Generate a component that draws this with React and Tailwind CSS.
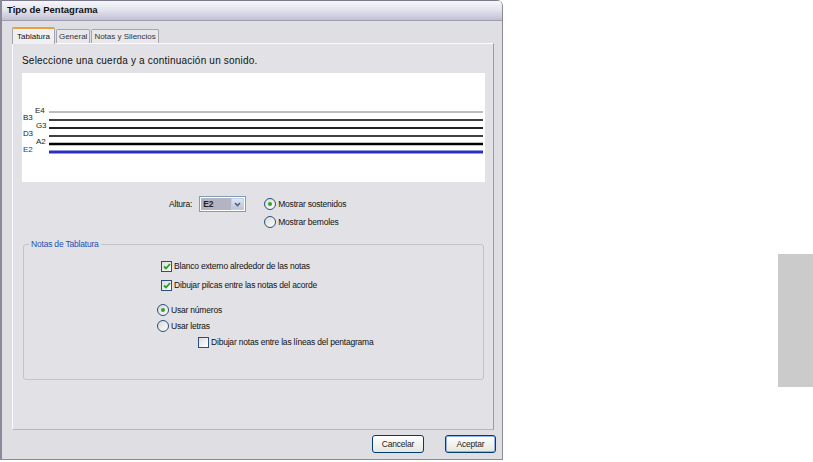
import React from "react";

const Radio = ({ checked, label }) => (
  <div className="flex items-center gap-[2px] h-[16px]">
    <span className="w-[12px] h-[12px] rounded-full border border-[#2b4f7a] bg-gradient-to-br from-[#d8d8d8] to-white flex items-center justify-center">
      {checked && <span className="w-[4px] h-[4px] rounded-full bg-[#2fa32f]" />}
    </span>
    <span>{label}</span>
  </div>
);

const Check = ({ checked, label }) => (
  <div className="flex items-center gap-[2px] h-[16px]">
    <span className="w-[11px] h-[11px] border border-[#2b4f7a] bg-gradient-to-br from-[#dcdcdc] to-white flex items-center justify-center">
      {checked && (
        <svg width="8" height="7" viewBox="0 0 8 7">
          <path d="M1 3.5 L3 5.5 L7 1" stroke="#21a121" strokeWidth="1.8" fill="none" />
        </svg>
      )}
    </span>
    <span>{label}</span>
  </div>
);

const Staff = () => {
  const lines = [
    { y: 39, w: 1, c: "#7a7a7a" },
    { y: 47, w: 1.4, c: "#000" },
    { y: 55, w: 2, c: "#222" },
    { y: 63, w: 1.4, c: "#000" },
    { y: 71, w: 2.6, c: "#000" },
    { y: 79, w: 3, c: "#2a2fc0" },
  ];
  const labels = [
    { t: "E4", x: 13, y: 40 },
    { t: "B3", x: 1, y: 47 },
    { t: "G3", x: 14, y: 55 },
    { t: "D3", x: 1, y: 63 },
    { t: "A2", x: 14, y: 71 },
    { t: "E2", x: 1, y: 79, c: "#2a2fc0" },
  ];
  return (
    <svg width="462" height="109" className="block">
      {lines.map((l) => (
        <line key={l.y} x1="27" x2="461" y1={l.y} y2={l.y} stroke={l.c} strokeWidth={l.w} />
      ))}
      {labels.map((l) => (
        <text key={l.t} x={l.x} y={l.y} fontSize="8" fill={l.c || "#222"} fontFamily="Liberation Sans, sans-serif">
          {l.t}
        </text>
      ))}
    </svg>
  );
};

export default function App() {
  return (
    <div className="w-[813px] h-[462px] bg-white flex justify-between font-['Liberation_Sans',sans-serif] text-[8.5px] tracking-[-0.2px] text-[#111]">
      <div className="w-[503px] h-[460px] flex flex-col bg-[#dfdfe3] border-l-2 border-r border-b border-[#8a8a98] rounded-tr-[6px] overflow-hidden">
        {/* title bar */}
        <div className="h-[21px] shrink-0 border-t border-[#7a7a8c] bg-gradient-to-b from-[#f6f6fa] via-[#e2e2ec] to-[#c0c0d4] border-b border-b-[#9e9eb0] flex items-center pl-[5px] font-bold text-[9.5px] tracking-normal text-[#111]">
          Tipo de Pentagrama
        </div>

        {/* tabs */}
        <div className="flex items-end h-[22px] pl-[10px] shrink-0 text-[8px] tracking-normal">
          <div className="h-[17px] px-[4px] flex items-center bg-[#f0f0f4] border border-b-0 border-[#a5a5b0] border-t-2 border-t-[#e6a23a] rounded-t-[2px] relative z-10 -mb-px">
            Tablatura
          </div>
          <div className="h-[14px] px-[2px] ml-[1px] flex items-center bg-[#e8e8ec] border border-b-0 border-[#a5a5b0] rounded-t-[2px] text-[#333]">
            General
          </div>
          <div className="h-[14px] px-[2px] ml-[1px] flex items-center bg-[#e8e8ec] border border-b-0 border-[#a5a5b0] rounded-t-[2px] text-[#333]">
            Notas y Silencios
          </div>
        </div>

        {/* panel */}
        <div className="ml-[10px] mr-[8px] h-[387px] shrink-0 bg-[#e2e2e6] border border-t-[#fbfbfb] border-l-[#fbfbfb] border-r-[#9a9aa4] border-b-[#b5b5bc] flex flex-col pl-[9px] pr-[8px]">
          <div className="mt-[10px] h-[12px] flex items-center text-[10px] tracking-[0.2px]">
            Seleccione una cuerda y a continuación un sonido.
          </div>
          <div className="mt-[7px] h-[109px] bg-white">
            <Staff />
          </div>

          {/* altura row */}
          <div className="mt-[14px] flex items-start">
            <div className="ml-[147px] h-[16px] flex items-center">Altura:</div>
            <div className="ml-[7px] w-[47px] h-[16px] bg-white border border-[#7f9db9] flex items-center p-[1px]">
              <span className="flex-1 h-full bg-[#b3b3c2] flex items-center pl-[2px] font-bold text-[#222]">E2</span>
              <span className="w-[13px] h-full bg-gradient-to-b from-[#dfe6f2] to-[#b7c4dc] border border-[#c4cfe2] flex items-center justify-center">
                <svg width="7" height="5" viewBox="0 0 7 5">
                  <path d="M1 1 L3.5 3.5 L6 1" stroke="#4d6185" strokeWidth="1.6" fill="none" />
                </svg>
              </span>
            </div>
            <div className="ml-[18px] flex flex-col gap-[2px]">
              <Radio checked label="Mostrar sostenidos" />
              <Radio label="Mostrar bemoles" />
            </div>
          </div>

          {/* group box */}
          <div className="mt-[14px] ml-[1px] mr-[1px] h-[136px] border border-[#c3c3cb] rounded-[3px] relative flex flex-col">
            <span className="absolute -top-[7px] left-[5px] px-[2px] bg-[#e2e2e6] text-[#1f4fb5]">Notas de Tablatura</span>
            <div className="ml-[137px] mt-[13px] flex flex-col gap-[3px]">
              <Check checked label="Blanco externo alrededor de las notas" />
              <Check checked label="Dibujar pilcas entre las notas del acorde" />
            </div>
            <div className="ml-[133px] mt-[9px] flex flex-col">
              <Radio checked label="Usar números" />
              <Radio label="Usar letras" />
            </div>
            <div className="ml-[174px]">
              <Check label="Dibujar notas entre las líneas del pentagrama" />
            </div>
          </div>
        </div>

        {/* buttons */}
        <div className="flex justify-end gap-[21px] pr-[6px] mt-[5px]">
          <button className="w-[52px] h-[18px] rounded-[3px] border border-[#003c74] bg-gradient-to-b from-white to-[#e6e6e0] flex items-center justify-center text-[#222]">
            Cancelar
          </button>
          <button className="w-[51px] h-[18px] rounded-[3px] border border-[#003c74] bg-gradient-to-b from-white to-[#e6e6e0] shadow-[inset_0_0_0_1px_#90b4e8] flex items-center justify-center text-[#222]">
            Aceptar
          </button>
        </div>
      </div>

      <div className="w-[35px] h-[133px] mt-[254px] bg-[#cbcbcb]" />
    </div>
  );
}
